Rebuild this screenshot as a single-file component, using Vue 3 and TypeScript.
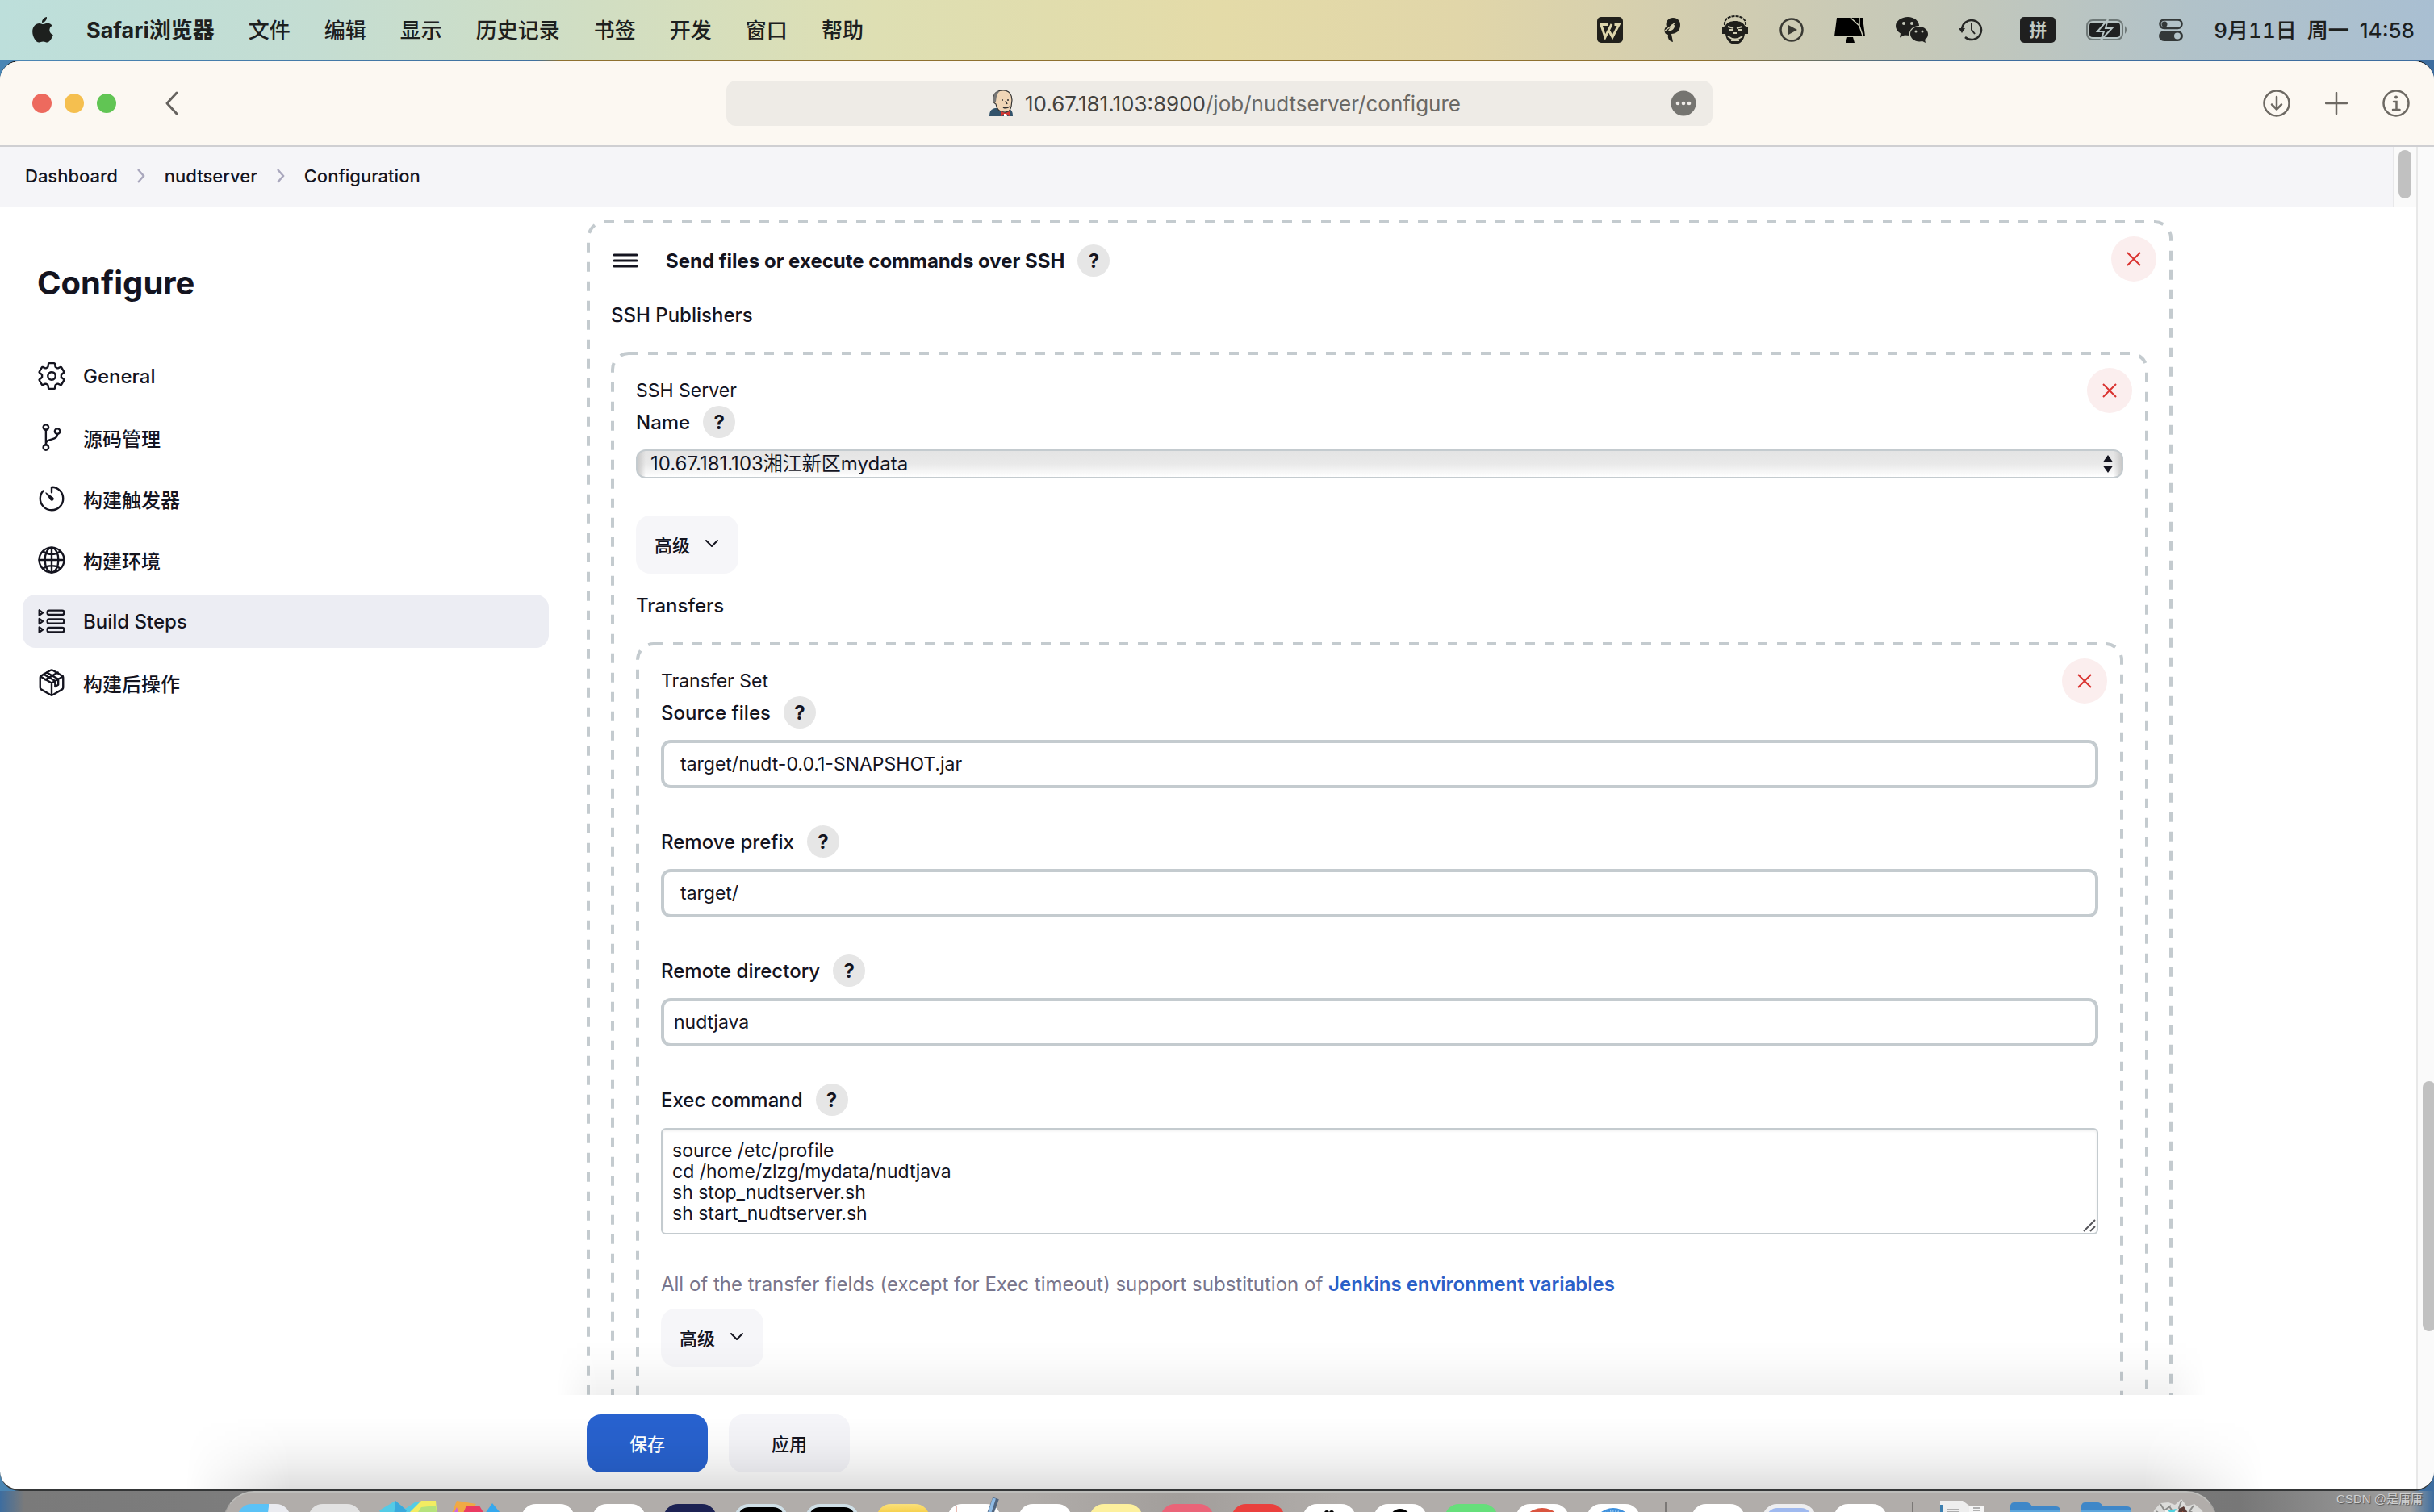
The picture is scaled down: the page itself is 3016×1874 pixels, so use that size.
<script setup lang="ts">
import { ref } from 'vue'

const menus = ['文件', '编辑', '显示', '历史记录', '书签', '开发', '窗口', '帮助']
const crumbs = ['Dashboard', 'nudtserver', 'Configuration']

const sections = [
  { id: 'general', label: 'General' },
  { id: 'scm', label: '源码管理' },
  { id: 'triggers', label: '构建触发器' },
  { id: 'environment', label: '构建环境' },
  { id: 'steps', label: 'Build Steps' },
  { id: 'post', label: '构建后操作' },
]
const active = ref('steps')

const server = ref('10.67.181.103湘江新区mydata')
const fields = ref([
  { id: 'source-files', label: 'Source files', value: 'target/nudt-0.0.1-SNAPSHOT.jar', tight: false },
  { id: 'remove-prefix', label: 'Remove prefix', value: 'target/', tight: false },
  { id: 'remote-directory', label: 'Remote directory', value: 'nudtjava', tight: true },
])
const command = ref(
  'source /etc/profile\ncd /home/zlzg/mydata/nudtjava\nsh stop_nudtserver.sh\nsh start_nudtserver.sh',
)

const dock = [
  'finder', 'launchpad', 'maps', 'shapes', 'photos', 'white', 'navy', 'terminal', 'monitor', 'amber',
  'editor', 'white', 'notes', 'pink', 'red', 'qq', 'penguin', 'green', 'chrome', 'safari',
  'sep', 'white', 'preview', 'white', 'sep', 'docs', 'folder', 'folder', 'trash',
]
</script>

<template>
  <div class="desktop">
    <header class="menubar">
      <svg class="apple" viewBox="0 0 26 32" width="26" height="32">
        <path d="M18 0c.3 3.400-2.500 7-6 7-.3-3.300 2.700-6.700 6-7zM13.500 9c1.400 0 3-1.500 5.500-1.300 2.400.1 4.400 1.200 5.600 3-4.900 3.100-4 9.500 1.200 11.600-1.300 3.800-4.300 9.200-7.300 9.300-2 0-2.700-1.200-5.100-1.200-2.500 0-3.300 1.200-5.200 1.200C4.600 31.500.2 24.600.2 18.200c0-6.600 4.200-10.300 8.300-10.300 2.200 0 3.700 1.100 5 1.100z" />
      </svg>
      <nav class="menus">
        <strong>Safari浏览器</strong>
        <span v-for="m in menus" :key="m">{{ m }}</span>
      </nav>
      <div class="status">
        <svg width="32" height="32" viewBox="0 0 32 32">
          <rect width="32" height="32" rx="5" fill="#21201b" />
          <path d="M4 9.500h9M5 10l5 15 8-16M14.500 17l4.500 8 8-15.500h-5.500" fill="none" stroke="#ddd5ab" stroke-width="3" />
        </svg>
        <svg class="pen" width="24" height="32" viewBox="0 0 24 32">
          <path d="M4 21C1 17 3 13 5 12 3 5 8 1 13 1c6 0 9 4 9 9 0 7-5 11-11 11l2 10c-5-1-7-5-6-9zM12 9l-5 8c4 1 8-2 8-6 0-1-1-2-3-2z" fill="#1f1f1b" fill-rule="evenodd" />
          <path d="M2 18L16 7" stroke="#d5cfaf" stroke-width="1.500" />
        </svg>
        <svg width="34" height="36" viewBox="0 0 34 36">
          <path d="M4 12C3 5 9 1 17 1s14 4 13 11" fill="none" stroke="#1f1f1b" stroke-width="2" stroke-dasharray="4 1" />
          <path d="M5 13C8 5 26 5 29 13l4 2v8h-4c-1 8-6 13-12 13S6 31 5 23H1v-8z" fill="#1f1f1b" />
          <path d="M8 14l7 2M26 14l-7 2M9 18h5M20 18h5M15 22h4M8 26q9 7 18 0M12 31h10" stroke="#cfccb2" stroke-width="2" fill="none" />
        </svg>
        <svg width="30" height="30" viewBox="0 0 30 30">
          <circle cx="15" cy="15" r="13.500" fill="none" stroke="#3a3a34" stroke-width="2.500" />
          <path d="M11 9l11 6-11 6z" fill="#3a3a34" />
        </svg>
        <svg width="38" height="32" viewBox="0 0 38 32">
          <path d="M3 1h32l3 23H0zM16 25h7l2 7H14z" fill="#000" />
          <path d="M20 1l11 10 4 12M31 11V1" stroke="#c9cab6" stroke-width="1.500" fill="none" />
        </svg>
        <svg width="40" height="32" viewBox="0 0 40 32">
          <path d="M15 0c8 0 14 5 14 11-8 0-13 5-12 12l-6-.500-6 3 1-5C2 18 0 15 0 11 0 5 7 0 15 0z" fill="#1f1f1d" />
          <path d="M29 12c6 0 11 4 11 9 0 3-1 5-4 7l1 4-4-2c-8 2-15-3-15-9 0-5 5-9 11-9z" fill="#1f1f1d" />
          <g fill="#c5c8ba"><circle cx="10" cy="8" r="2" /><circle cx="20" cy="8" r="2" /><circle cx="25" cy="18" r="1.500" /><circle cx="33" cy="18" r="1.500" /></g>
        </svg>
        <svg width="30" height="28" viewBox="0 0 30 28">
          <path d="M4 14A12 12 0 1 1 8 23" fill="none" stroke="#262725" stroke-width="2.500" />
          <path d="M0 12h8l-4 6z" fill="#262725" />
          <path d="M16 6v8l4 5" fill="none" stroke="#262725" stroke-width="2" />
        </svg>
        <span class="ime">拼</span>
        <svg width="52" height="26" viewBox="0 0 52 26">
          <rect x="1" y="1" width="44" height="24" rx="7" fill="none" stroke="#6e7877" stroke-width="2" />
          <rect x="4" y="4" width="38" height="18" rx="4" fill="#1f2020" />
          <path d="M48 8q4 5 0 10z" fill="#6e7877" />
          <path d="M27 0L14 15h8l-4 11 14-15h-8z" fill="#1f2020" stroke="#b7c4c4" stroke-width="2" />
        </svg>
        <svg width="30" height="28" viewBox="0 0 30 28">
          <rect x="1.500" y="1.500" width="27" height="10.500" rx="5" fill="none" stroke="#333838" stroke-width="2.500" />
          <circle cx="7" cy="7" r="3.500" fill="#333838" />
          <rect y="15" width="30" height="13" rx="6.500" fill="#333838" />
          <circle cx="23" cy="21.500" r="4" fill="#b3c4c9" />
        </svg>
        <span class="clock"><span class="date">9月11日</span><span>周一</span><time>14:58</time></span>
      </div>
    </header>

    <main class="window">
      <div class="toolbar">
        <div class="tools-left">
          <button class="light close" aria-label="Close"></button>
          <button class="light minimise" aria-label="Minimise"></button>
          <button class="light zoom" aria-label="Zoom"></button>
          <button class="plain back" aria-label="Back">
            <svg width="20" height="32" viewBox="0 0 20 32"><path d="M16 3L4 16l12 13" fill="none" stroke="#66635f" stroke-width="3" stroke-linecap="round" stroke-linejoin="round" /></svg>
          </button>
        </div>
        <div class="address">
          <span class="address-text">
            <svg width="30" height="32" viewBox="0 0 30 32">
              <path d="M0 32c0-6 2-9 7-10l15 0c5 1 7 4 7 10z" fill="#33536b" />
              <path d="M5 9C6 2 12 0 17 0c8 0 11 6 11 12l-1 8c-1 5-4 7-8 7-6 0-10-4-11-10C5 16 4 12 5 9z" fill="#f0d6b7" stroke="#333" stroke-width="1.200" />
              <path d="M5 9C6 3 9 1 13 1 9 4 9 8 8 14l-2 1C4 13 4 11 5 9z" fill="#777" />
              <path d="M16 11v2M23 11v2M20 13l2 4M17 21q4 2 8-1" stroke="#333" stroke-width="1.500" fill="none" />
              <path d="M14 26l6 2 5-2v6l-5-2-6 2z" fill="#d33833" /><path d="M18 29h3l1 3h-4z" fill="#fff" />
            </svg>
            <span><b>10.67.181.103:8900</b>/job/nudtserver/configure</span>
          </span>
          <button class="plain more" aria-label="Page menu">
            <svg width="32" height="32" viewBox="0 0 32 32"><circle cx="16" cy="16" r="15.500" fill="#757470" /><g fill="#efece8"><circle cx="9" cy="16" r="2.300" /><circle cx="16" cy="16" r="2.300" /><circle cx="23" cy="16" r="2.300" /></g></svg>
          </button>
        </div>
        <div class="tools-right">
          <button class="plain" aria-label="Downloads">
            <svg width="34" height="34" viewBox="0 0 34 34"><g fill="none" stroke="#6d6963" stroke-width="2.500" stroke-linecap="round" stroke-linejoin="round"><circle cx="17" cy="17" r="15.500" /><path d="M17 9v15M11 18.500l6 6 6-6" /></g></svg>
          </button>
          <button class="plain" aria-label="New tab">
            <svg width="28" height="28" viewBox="0 0 28 28"><path d="M14 1v26M1 14h26" fill="none" stroke="#6d6963" stroke-width="2.500" stroke-linecap="round" /></svg>
          </button>
          <button class="plain" aria-label="Page info">
            <svg width="34" height="34" viewBox="0 0 34 34"><g fill="none" stroke="#6d6963" stroke-width="2.500" stroke-linecap="round"><circle cx="17" cy="17" r="15.500" /><path d="M14 15h3.500v10M13 25h8.500" /></g><circle cx="17" cy="9.500" r="2" fill="#6d6963" /></svg>
          </button>
        </div>
      </div>

      <div class="viewport">
        <div class="page">
          <div class="crumb-row">
            <nav class="crumbs">
              <template v-for="(c, i) in crumbs" :key="c">
                <svg v-if="i" width="12" height="20" viewBox="0 0 12 20"><path d="M2 2l7 8-7 8" fill="none" stroke="#a9a7bd" stroke-width="2.500" /></svg>
                <a href="#">{{ c }}</a>
              </template>
            </nav>
            <div class="inner-track"><div class="inner-thumb"></div></div>
          </div>

          <div class="body">
            <aside class="side">
              <h1>Configure</h1>
              <nav class="tasks">
                <button v-for="s in sections" :key="s.id" class="task" :class="{ active: active === s.id }" @click="active = s.id">
                  <svg class="task-icon" viewBox="0 0 512 512" width="38" height="38">
                    <g v-if="s.id === 'general'">
                      <path d="M262.290 192.310a64 64 0 1 0 57.400 57.400 64.130 64.130 0 0 0-57.400-57.400zM416.390 256a154.340 154.340 0 0 1-1.530 20.790l45.210 35.460a10.810 10.810 0 0 1 2.450 13.750l-42.770 74a10.810 10.810 0 0 1-13.140 4.590l-44.900-18.080a16.110 16.110 0 0 0-15.170 1.750A164.480 164.480 0 0 1 325 400.800a15.940 15.940 0 0 0-8.820 12.140l-6.730 47.890a11.080 11.080 0 0 1-10.680 9.170h-85.540a11.110 11.110 0 0 1-10.690-8.870l-6.720-47.820a16.070 16.070 0 0 0-9-12.220 155.300 155.300 0 0 1-21.460-12.570 16 16 0 0 0-15.110-1.710l-44.890 18.070a10.810 10.810 0 0 1-13.140-4.580l-42.770-74a10.800 10.800 0 0 1 2.450-13.750l38.210-30a16.050 16.050 0 0 0 6-14.080c-.36-4.170-.58-8.330-.58-12.500s.21-8.270.58-12.350a16 16 0 0 0-6.070-13.940l-38.190-30A10.810 10.810 0 0 1 49.480 186l42.770-74a10.810 10.810 0 0 1 13.140-4.590l44.900 18.080a16.110 16.110 0 0 0 15.170-1.750A164.480 164.480 0 0 1 187 111.200a15.940 15.940 0 0 0 8.820-12.140l6.730-47.890A11.080 11.080 0 0 1 213.230 42h85.540a11.110 11.110 0 0 1 10.690 8.870l6.720 47.820a16.070 16.070 0 0 0 9 12.220 155.300 155.300 0 0 1 21.460 12.570 16 16 0 0 0 15.110 1.710l44.890-18.070a10.810 10.810 0 0 1 13.140 4.580l42.770 74a10.800 10.800 0 0 1-2.450 13.750l-38.210 30a16.050 16.050 0 0 0-6.050 14.080c.33 4.140.55 8.300.55 12.470z" />
                    </g>
                    <g v-else-if="s.id === 'scm'">
                      <circle cx="160" cy="88" r="44" /><circle cx="160" cy="424" r="44" /><circle cx="352" cy="156" r="44" />
                      <path d="M160 380V132M352 200c0 128-192 56-192 168" />
                    </g>
                    <g v-else-if="s.id === 'triggers'">
                      <path d="M112.910 128A191.850 191.850 0 0 0 64 254c-1.180 106.350 85.650 193.800 192 194 106.200.2 192-85.830 192-192 0-104.540-83.550-189.610-187.500-192a4.360 4.360 0 0 0-4.500 4.370V152" />
                      <path class="solid" d="M233.380 278.630l-79-113a8.130 8.130 0 0 1 11.320-11.320l113 79a32.500 32.500 0 0 1-37.250 53.260 33.210 33.210 0 0 1-8.070-7.940z" />
                    </g>
                    <g v-else-if="s.id === 'environment'">
                      <circle cx="256" cy="256" r="208" />
                      <path d="M256 48c-58.070 0-112.670 93.130-112.670 208S197.930 464 256 464s112.670-93.130 112.670-208S314.070 48 256 48zM117.330 117.330c38.240 27.150 86.380 43.340 138.670 43.340s100.430-16.190 138.670-43.340M394.670 394.670c-38.240-27.150-86.380-43.340-138.670-43.340s-100.430 16.190-138.670 43.340M256 48v416M48 256h416" />
                    </g>
                    <g v-else-if="s.id === 'steps'">
                      <path d="M50 72v84l56-42zM50 214v84l56-42zM50 356v84l56-42z" />
                      <rect x="184" y="76" width="278" height="72" rx="30" /><rect x="184" y="220" width="278" height="72" rx="30" /><rect x="184" y="364" width="278" height="72" rx="30" />
                    </g>
                    <g v-else>
                      <path d="M448 341.370V170.610A32 32 0 0 0 432.110 143l-152-88.460a47.940 47.940 0 0 0-48.240 0L79.890 143A32 32 0 0 0 64 170.610v170.760A32 32 0 0 0 79.890 369l152 88.460a48 48 0 0 0 48.240 0l152-88.460A32 32 0 0 0 448 341.370z" />
                      <path d="M69 154l187 110 187-110M256 464V264M124 118l190 110v96l52-30v-96L176 88M150 208l210-122" />
                    </g>
                  </svg>
                  {{ s.label }}
                </button>
              </nav>
            </aside>

            <section class="content">
              <div class="repeat step">
                <svg class="dashes"><rect x="2" y="2" rx="20" ry="20" /></svg>
                <button class="remove" aria-label="Remove step"><svg width="18" height="18" viewBox="0 0 18 18"><path d="M1 1l16 16M17 1L1 17" /></svg></button>
                <div class="label-row">
                  <svg class="grip" width="32" height="20" viewBox="0 0 32 20"><path d="M2 3h28M2 10h28M2 17h28" stroke="#14141f" stroke-width="3" stroke-linecap="round" /></svg>
                  <strong>Send files or execute commands over SSH</strong>
                  <button class="help" aria-label="Help">?</button>
                </div>
                <h2 class="group publishers">SSH Publishers</h2>

                <div class="repeat">
                  <svg class="dashes"><rect x="2" y="2" rx="20" ry="20" /></svg>
                  <button class="remove" aria-label="Remove server"><svg width="18" height="18" viewBox="0 0 18 18"><path d="M1 1l16 16M17 1L1 17" /></svg></button>
                  <div class="caption">SSH Server</div>
                  <div class="label-row">
                    <label for="server">Name</label>
                    <button class="help" aria-label="Help">?</button>
                  </div>
                  <div class="select-wrap">
                    <select id="server" v-model="server"><option>10.67.181.103湘江新区mydata</option></select>
                    <svg class="stepper" width="12" height="22" viewBox="0 0 12 22"><path d="M6 0l6 8.500H0zM6 22l6-8.500H0z" fill="#14141f" /></svg>
                  </div>
                  <button class="advanced server-advanced">高级
                    <svg width="18" height="12" viewBox="0 0 18 12"><path d="M2 2l7 7 7-7" /></svg>
                  </button>
                  <h2 class="group transfers">Transfers</h2>

                  <div class="repeat">
                    <svg class="dashes"><rect x="2" y="2" rx="20" ry="20" /></svg>
                    <button class="remove" aria-label="Remove transfer"><svg width="18" height="18" viewBox="0 0 18 18"><path d="M1 1l16 16M17 1L1 17" /></svg></button>
                    <div class="caption">Transfer Set</div>
                    <div v-for="f in fields" :key="f.id" class="field">
                      <div class="label-row">
                        <label :for="f.id">{{ f.label }}</label>
                        <button class="help" aria-label="Help">?</button>
                      </div>
                      <input :id="f.id" v-model="f.value" type="text" :class="{ tight: f.tight }" />
                    </div>
                    <div class="field">
                      <div class="label-row">
                        <label for="command">Exec command</label>
                        <button class="help" aria-label="Help">?</button>
                      </div>
                      <div class="area-wrap">
                        <textarea id="command" v-model="command" spellcheck="false"></textarea>
                        <svg class="resizer" width="16" height="16" viewBox="0 0 16 16"><path d="M1 15L15 1M9 15l6-6" stroke="#55555a" stroke-width="2" /></svg>
                      </div>
                    </div>
                    <p class="hint">All of the transfer fields (except for Exec timeout) support substitution of <a href="#">Jenkins environment variables</a></p>
                    <button class="advanced">高级
                      <svg width="18" height="12" viewBox="0 0 18 12"><path d="M2 2l7 7 7-7" /></svg>
                    </button>
                  </div>
                </div>
              </div>
            </section>
            <div class="sheet-shadow"></div>
          </div>

          <div class="actions">
            <button class="action primary">保存</button>
            <button class="action">应用</button>
          </div>
        </div>
        <div class="outer-track"><div class="outer-thumb"></div></div>
        <div class="dock-shadow"></div>
      </div>
    </main>

    <footer class="dock-area">
      <div class="dock">
        <div v-for="(d, i) in dock" :key="i" :class="['dock-item', d]">
          <svg v-if="d === 'maps'" width="72" height="20" viewBox="0 0 72 20"><path d="M0 12L20 0l12 10L44 2l26 0 2 18H4z" fill="#54cbe6" /><path d="M38 14L52 0h18l2 20H34z" fill="#f3ec62" /><path d="M20 0l14 12-4 8H18z" fill="#3aa9dc" /><path d="M52 8l-8 12h28l-2-14z" fill="#b5e27c" /></svg>
          <svg v-else-if="d === 'shapes'" width="66" height="20" viewBox="0 0 66 20"><path d="M8 0l24 4L18 20H0z" fill="#f0a944" /><path d="M8 8l-6 12h10z" fill="#cf65dd" /><path d="M20 6h16l8 14H14z" fill="#ea3b62" /><path d="M52 3l14 17H40z" fill="#35a8ee" /></svg>
          <svg v-else-if="d === 'photos'" width="66" height="16" viewBox="0 0 66 16"><circle cx="27" cy="19" r="6" fill="#d9bc4c" /></svg>
          <svg v-else-if="d === 'editor'" width="66" height="26" viewBox="0 0 66 26"><path d="M11 10v16" stroke="#eab9b0" stroke-width="2" /><path d="M60 1l-9 25" stroke="#51657e" stroke-width="8" /><path d="M58 1l-8 25" stroke="#8fbbe5" stroke-width="4" /></svg>
          <svg v-else-if="d === 'qq'" width="66" height="16" viewBox="0 0 66 16"><circle cx="30" cy="11" r="3" /><circle cx="36" cy="11" r="3" /></svg>
          <svg v-else-if="d === 'penguin'" width="66" height="16" viewBox="0 0 66 16"><circle cx="33" cy="19" r="13" /></svg>
          <svg v-else-if="d === 'chrome'" width="66" height="16" viewBox="0 0 66 16"><circle cx="33" cy="31" r="26" fill="#da553f" /></svg>
          <svg v-else-if="d === 'safari'" width="66" height="16" viewBox="0 0 66 16"><circle cx="33" cy="30" r="25" fill="#3f91dd" /><circle cx="33" cy="30" r="20" fill="none" stroke="#a8d2f4" stroke-width="5" stroke-dasharray="1 2" /></svg>
          <svg v-else-if="d === 'docs'" width="66" height="20" viewBox="0 0 66 20"><path d="M2 0h28l8 6v14H2z" fill="#eee" /><path d="M2 5v15h4V5z" fill="#3d7fb0" /><path d="M38 6h18v14H38z" fill="#f5f5f5" /><path d="M10 11h16M10 14h16M10 17h10M43 9h8M43 12h8M43 15h8" stroke="#999" stroke-width="1.500" /></svg>
          <svg v-else-if="d === 'folder'" width="66" height="20" viewBox="0 0 66 20"><path d="M0 14q0-12 5-12h16q4 0 7 5h30q5 0 5 7v6H0z" fill="#3f87c8" /><path d="M0 12h63v8H0z" fill="#5ca6dd" /><path d="M14 15h46" stroke="#8cc8f4" stroke-width="2" /></svg>
          <svg v-else-if="d === 'trash'" width="66" height="24" viewBox="0 0 66 24">
            <path d="M1 24l2-10 8-9 10-1 8 3 8-7 7 9 9-3 10 8 2 10z" fill="#dcdcda" />
            <path d="M11 6l5 8 8-6M6 15l8 7M37 2l-3 9 9 5M52 8l-5 7 10 5M22 9l4 6" stroke="#8c8c8a" stroke-width="2" fill="none" />
            <path d="M16 14l7 10h6l3-9z" fill="#f6f6f4" /><path d="M20 14l11-2-5 8z" fill="#4fd0dd" />
            <path d="M34 12l6-3 5 8-6 7-7-2z" fill="#5a3b36" /><path d="M38 15l6 4-6 4z" fill="#c0603c" />
          </svg>
        </div>
      </div>
      <span class="watermark">CSDN @是庸庸</span>
    </footer>
  </div>
</template>

<style>
body {
  margin: 0;
}
</style>

<style scoped>
.desktop,
.desktop * {
  box-sizing: border-box;
}
.desktop {
  display: flex;
  flex-direction: column;
  height: 100vh;
  overflow: hidden;
  font-family: Inter, 'Noto Sans CJK SC', sans-serif;
  font-size: 24px;
  font-weight: 500;
  color: #14141f;
  background: linear-gradient(90deg, #4a86b4 0, #3f719f 22%, #8e712f 23%, #8e712f 70%, #3d6d9f 80%, #3d6d9f 100%);
}
button,
input,
select,
textarea {
  font: inherit;
  color: inherit;
  margin: 0;
}
button {
  border: 0;
  padding: 0;
}
svg {
  display: block;
  flex: none;
}
.menubar {
  flex: none;
  height: 74px;
  padding: 0 24px 0 40px;
  display: flex;
  align-items: center;
  font-size: 26px;
  color: #1d201e;
  background: linear-gradient(90deg, #bddfdb 0, #c4ddd2 13%, #dedfb3 36%, #e4dba8 50%, #e1d6a9 60%, #d2cdb0 70%, #c4c8ba 80%, #b1c2c9 90%, #a9bfd2 100%);
}
.apple {
  margin-right: 41px;
  fill: #1d201e;
}
.menus {
  display: flex;
  align-items: baseline;
  gap: 42px;
  padding-bottom: 4px;
}
.menus strong {
  font-size: 27px;
  font-weight: 700;
}
.status {
  margin-left: auto;
  display: flex;
  align-items: center;
  gap: 38px;
}
.pen {
  margin: 0 11px;
}
.ime {
  width: 44px;
  height: 32px;
  margin-left: 8px;
  border-radius: 5px;
  background: #1f1f1f;
  color: #c3cac2;
  font-size: 22px;
  font-weight: 700;
  line-height: 32px;
  text-align: center;
}
.clock {
  display: flex;
  align-items: baseline;
  gap: 13px;
  padding-bottom: 4px;
  white-space: nowrap;
}
.date {
  font-variant-numeric: tabular-nums;
}
.window {
  flex: 1 1 0;
  min-height: 0;
  margin-top: 1px;
  display: flex;
  flex-direction: column;
  border-top: 1px solid #000;
  border-bottom: 2px solid #343637;
  border-radius: 24px;
  overflow: hidden;
  background: #fff;
}
.toolbar {
  flex: none;
  height: 106px;
  padding-left: 6px;
  display: grid;
  grid-template-columns: 1fr minmax(0, 1222px) 1fr;
  align-items: center;
  border-bottom: 2px solid #cfcfd2;
  background: #fcf8f2;
}
.tools-left,
.tools-right {
  display: flex;
  align-items: center;
}
.tools-left {
  gap: 16px;
  padding-left: 34px;
}
.light {
  width: 24px;
  height: 24px;
  border-radius: 50%;
}
.close {
  background: #ed6a5e;
}
.minimise {
  background: #f5bf4f;
}
.zoom {
  background: #61c554;
}
.plain {
  background: none;
}
.back {
  margin-left: 43px;
}
.address {
  height: 56px;
  padding: 0 20px 0 34px;
  border-radius: 12px;
  display: grid;
  grid-template-columns: 1fr auto 1fr;
  align-items: center;
  background: #eeebe6;
  color: #6a6864;
  font-size: 26px;
  font-weight: 400;
}
.address-text {
  grid-column: 2;
  display: flex;
  align-items: center;
  gap: 14px;
}
.address b {
  font-weight: 400;
  color: #454340;
}
.more {
  justify-self: end;
}
.tools-right {
  justify-content: flex-end;
  gap: 43px;
  padding-right: 30px;
}
.viewport {
  position: relative;
  flex: 1 1 0;
  min-height: 0;
  display: flex;
}
.page {
  flex: 1;
  min-width: 0;
  display: flex;
  flex-direction: column;
}
.crumb-row {
  flex: none;
  height: 74px;
  display: flex;
  background: #f5f5f8;
}
.crumbs {
  flex: 1;
  display: flex;
  align-items: center;
  gap: 23px;
  padding: 0 0 2px 31px;
  font-size: 22px;
}
.crumbs a {
  color: inherit;
  text-decoration: none;
}
.inner-track {
  width: 29px;
  padding: 4px 5px;
  border-left: 2px solid #e8e8ea;
  background: #fafafa;
}
.inner-thumb {
  width: 16px;
  height: 60px;
  border-radius: 8px;
  background: #c1c1c1;
}
.outer-track {
  flex: none;
  width: 22px;
  border-left: 2px solid #e8e8e8;
  background: #fafafa;
}
.outer-thumb {
  width: 16px;
  height: 310px;
  margin: 1158px 0 0 6px;
  border-radius: 8px;
  background: #c1c1c1;
}
.body {
  position: relative;
  flex: 1 1 0;
  min-height: 0;
  display: flex;
  overflow: hidden;
}
.side {
  flex: 0 0 727px;
  padding: 66px 47px 0 28px;
}
.side h1 {
  margin: 0 0 53px;
  padding-left: 18px;
  font-size: 40px;
  line-height: 58px;
  font-weight: 700;
}
.tasks {
  display: flex;
  flex-direction: column;
  gap: 10px;
}
.task {
  height: 66px;
  padding-left: 17px;
  display: flex;
  align-items: center;
  gap: 20px;
  border-radius: 16px;
  background: none;
  text-align: left;
}
.task.active {
  background: #ecedf3;
}
.task-icon {
  fill: none;
  stroke: #14141f;
  stroke-width: 32;
  stroke-linecap: round;
  stroke-linejoin: round;
}
.task-icon .solid {
  fill: #14141f;
  stroke: none;
}
.content {
  flex: 0 1 1965px;
  min-width: 0;
  padding-top: 17px;
}
.repeat {
  position: relative;
  padding: 30px 31px 60px;
}
.repeat.step {
  padding-left: 30px;
  padding-right: 30px;
}
.dashes {
  position: absolute;
  inset: 0;
  width: 100%;
  height: 100%;
  pointer-events: none;
}
.dashes rect {
  width: calc(100% - 4px);
  height: calc(100% - 4px);
  fill: none;
  stroke: #c4cbcf;
  stroke-width: 4;
  stroke-dasharray: 12 12;
}
.remove {
  position: absolute;
  top: 20px;
  right: 20px;
  width: 56px;
  height: 56px;
  border-radius: 50%;
  display: grid;
  place-items: center;
  background: #fbeeee;
}
.remove svg {
  stroke: #d9322f;
  stroke-width: 2;
}
.label-row {
  height: 40px;
  display: flex;
  align-items: center;
  gap: 16px;
}
.label-row strong {
  font-weight: 700;
}
.grip {
  margin: 0 18px 0 2px;
}
.help {
  width: 40px;
  height: 40px;
  border-radius: 50%;
  background: #e6e6e6;
  font-weight: 700;
}
.group {
  margin: 0 0 28px;
  font-size: 24px;
  line-height: 34px;
  font-weight: 500;
}
.publishers {
  margin-top: 31px;
}
.transfers {
  margin-top: 23px;
}
.caption {
  font-size: 23px;
  line-height: 37px;
  font-weight: 400;
}
.select-wrap {
  position: relative;
  margin-top: 14px;
}
select {
  display: block;
  width: 100%;
  height: 36px;
  padding: 0 40px 0 16px;
  appearance: none;
  border: 2px solid #c4cbcf;
  border-radius: 12px;
  font-weight: 400;
  line-height: 30px;
  background:
    linear-gradient(90deg, #c8c8c8, transparent) left / 10px 100% no-repeat,
    linear-gradient(270deg, #c8c8c8, transparent) right / 10px 100% no-repeat,
    linear-gradient(#e4e4e4, #e9e9e9 50%, #fff);
}
.stepper {
  position: absolute;
  top: 7px;
  right: 13px;
}
.advanced {
  height: 72px;
  padding: 0 24px 2px 23px;
  display: flex;
  align-items: center;
  gap: 18px;
  border-radius: 18px;
  background: #f6f6f9;
  font-size: 22px;
}
.advanced svg {
  fill: none;
  stroke: #14141f;
  stroke-width: 2;
  stroke-linecap: round;
  stroke-linejoin: round;
}
.server-advanced {
  margin-top: 46px;
}
.field {
  margin-bottom: 46px;
}
input {
  display: block;
  width: 100%;
  height: 60px;
  margin-top: 14px;
  padding: 0 20px;
  border: 4px solid #c4cbcf;
  border-radius: 12px;
  background: #fff;
  font-size: 23px;
  font-weight: 400;
}
input.tight {
  padding: 0 12px;
}
.area-wrap {
  position: relative;
  margin-top: 15px;
}
textarea {
  display: block;
  width: 100%;
  height: 132px;
  padding: 13px 12px;
  border: 2px solid #c4cbcf;
  border-radius: 6px;
  background: #fff;
  box-shadow: inset 0 2px 3px #0000000f;
  font-size: 23px;
  font-weight: 400;
  line-height: 26px;
  overflow: hidden;
  resize: none;
}
.resizer {
  position: absolute;
  right: 3px;
  bottom: 3px;
}
.hint {
  margin: 0 0 14px;
  line-height: 32px;
  font-weight: 400;
  color: #78758c;
}
.hint a {
  font-weight: 600;
  color: #2a60c8;
  text-decoration: none;
}
.sheet-shadow {
  position: absolute;
  left: 690px;
  right: 260px;
  bottom: 0;
  height: 68px;
  pointer-events: none;
  background: linear-gradient(transparent, #00000004 40%, #0000000e);
  mask-image: linear-gradient(90deg, transparent, #000 50px, #000 calc(100% - 50px), transparent);
}
.actions {
  flex: none;
  height: 117px;
  padding: 24px 0 0 727px;
  display: flex;
  gap: 26px;
}
.action {
  width: 150px;
  height: 72px;
  padding-bottom: 3px;
  border-radius: 18px;
  background: #f5f5f9;
  font-size: 22px;
}
.action.primary {
  background: #2862cf;
  color: #fff;
}
.dock-shadow {
  position: absolute;
  left: 230px;
  right: 210px;
  bottom: 0;
  height: 90px;
  pointer-events: none;
  background: linear-gradient(transparent, #00000006 35%, #00000010 65%, #00000021);
  mask-image: linear-gradient(90deg, transparent, #000 130px, #000 calc(100% - 150px), transparent);
}
.dock-area {
  position: relative;
  flex: none;
  height: 26px;
  padding-left: 8px;
  display: flex;
  justify-content: center;
  overflow: hidden;
  background: linear-gradient(90deg, #3d6d9f 0, #7a7a7a 1%, #888 50%, #777 92%, #a0a0a0 99%, #3d6d9f 100%);
}
.dock {
  height: 90px;
  padding: 16px 14px 0 16px;
  display: flex;
  gap: 22px;
  border: 1px solid #a3a3a1;
  border-top: 2px solid #bdbdba;
  border-radius: 38px;
  background: linear-gradient(90deg, #b1adaa 0, #b1adaa 40%, #a29e9b 48%, #b1adaa 56%, #b1adaa 100%);
}
.dock-item {
  width: 66px;
  height: 66px;
  margin-top: -2px;
  border-radius: 18px;
  background: #fff;
}
.dock-item.sep {
  width: 2px;
  margin: -4px 9px 0;
  border-radius: 0;
  background: #7b7876;
}
.dock-item.finder {
  background: linear-gradient(95deg, #5bc2f6 54%, #eaebf0 55%);
}
.dock-item.launchpad {
  background: #e2e2e2;
}
.dock-item.navy {
  background: #1c2253;
}
.dock-item.terminal,
.dock-item.monitor {
  border: 4px solid #cfdfe6;
  background: #000;
}
.dock-item.amber {
  background: linear-gradient(#fae07a, #f5cb3e 14px);
}
.dock-item.notes {
  background: #fdf09d;
}
.dock-item.pink {
  background: #ea6478;
}
.dock-item.red {
  background: #ea403d;
}
.dock-item.green {
  background: #66df7b;
}
.dock-item.preview {
  border: 5px solid #eeeef0;
  background: #9fb9ef;
}
.dock-item.maps,
.dock-item.shapes,
.dock-item.docs,
.dock-item.folder,
.dock-item.trash {
  border-radius: 0;
  background: none;
  margin-top: -6px;
}
.dock-item.trash {
  margin-top: -8px;
}
.dock-item.editor svg {
  margin-top: -8px;
}
.watermark {
  position: absolute;
  right: 14px;
  top: 0;
  font-size: 15px;
  line-height: 20px;
  font-weight: 400;
  color: #d0d0d0;
  text-shadow: 1px 1px 1px #555;
  font-family: 'Liberation Sans', 'Noto Sans CJK SC', sans-serif;
}
</style>
